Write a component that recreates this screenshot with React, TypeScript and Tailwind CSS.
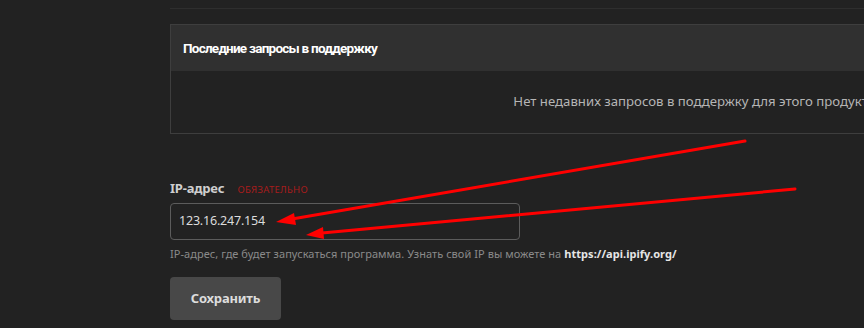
import React from "react";

export default function App() {
  return (
    <div
      className="relative w-[864px] h-[328px] overflow-hidden bg-[#222222]"
      style={{ fontFamily: '"Noto Sans", "Open Sans", sans-serif' }}
    >
      <div className="pl-[170px] w-[1300px]">
        <div className="h-[8px]" />
        <div className="h-px bg-[#2e2e2e]" />
        <div className="h-[15px]" />
        {/* Card */}
        <div className="w-[1052px] border border-[#3e3e3e]">
          <div className="h-[46px] bg-[#303030] flex items-center px-[12px]">
            <span
              className="text-[13.5px] font-bold text-white tracking-[-0.75px]"
              style={{ fontFamily: 'Roboto, "Noto Sans", sans-serif' }}
            >
              Последние запросы в поддержку
            </span>
          </div>
          <div className="h-[62px] flex items-center justify-center">
            <span className="text-[13.2px] text-[#b5b5b5] whitespace-nowrap">
              Нет недавних запросов в поддержку для этого продукта.
            </span>
          </div>
        </div>

        <div className="h-[45px]" />
        {/* Label */}
        <div className="flex items-baseline gap-[13px] h-[20px]">
          <span className="text-[13px] font-bold text-[#cfcfcf] tracking-[-0.2px]">IP-адрес</span>
          <span className="text-[9.5px] text-[#a81c1c] uppercase tracking-[0.3px]">Обязательно</span>
        </div>
        <div className="h-[4px]" />
        {/* Input */}
        <div className="w-[350px] h-[37px] border border-[#5c5c5c] rounded-[4px] flex items-center px-[8px]">
          <span className="text-[12.5px] text-[#dcdcdc] tracking-[-0.2px]">123.16.247.154</span>
        </div>
        <div className="h-[6px]" />
        <div className="text-[11px] text-[#8a8a8a] leading-[16px] tracking-[0.05px] whitespace-nowrap">
          IP-адрес, где будет запускаться программа. Узнать свой IP вы можете на{" "}
          <span className="font-bold text-[#e6e6e6]">https://api.ipify.org/</span>
        </div>
        <div className="h-[15px]" />
        <button className="w-[111px] h-[43px] rounded-[4px] bg-[#484848] text-[13px] font-bold text-[#dddddd] tracking-[-0.2px]">
          Сохранить
        </button>
      </div>

      {/* Annotation arrows */}
      <svg
        className="absolute left-0 top-0 pointer-events-none"
        width="864"
        height="328"
        viewBox="0 0 864 328"
      >
        <line x1="745" y1="141" x2="292" y2="219" stroke="#ff0000" strokeWidth="3" strokeLinecap="round" />
        <polygon points="276,222 294,213 296,225" fill="#ff0000" />
        <line x1="795" y1="189" x2="322" y2="233" stroke="#ff0000" strokeWidth="3" strokeLinecap="round" />
        <polygon points="306,235 323,227 324,239" fill="#ff0000" />
      </svg>
    </div>
  );
}
